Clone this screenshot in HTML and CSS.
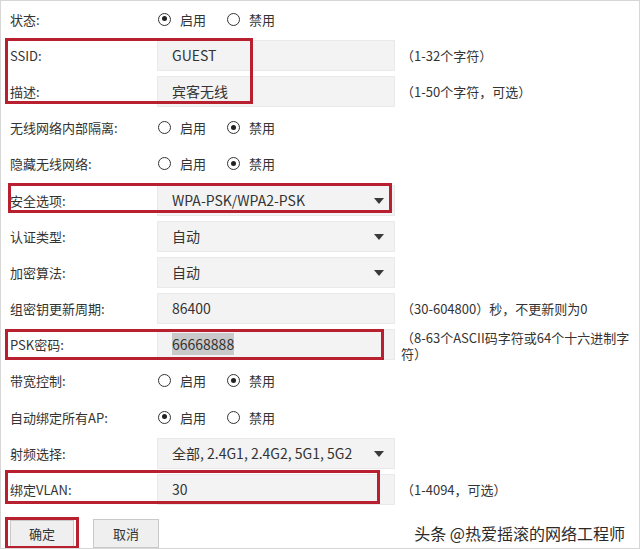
FILE: index.html
```html
<!DOCTYPE html>
<html lang="zh-CN">
<head>
<meta charset="utf-8">
<link rel="stylesheet" href="styles.css">
</head>
<body>
<div class="page">
  <div class="row">
    <div class="label">状态:</div>
    <div class="radios">
      <span class="radio checked"></span><span class="rtext">启用</span>
      <span class="radio"></span><span class="rtext">禁用</span>
    </div>
  </div>
  <div class="group">
    <div class="row">
      <div class="label">SSID:</div>
      <div class="input">GUEST</div>
      <div class="hint">（1-32个字符）</div>
    </div>
    <div class="row">
      <div class="label">描述:</div>
      <div class="input">宾客无线</div>
      <div class="hint">（1-50个字符，可选）</div>
    </div>
    <div class="redbox box-ssid"></div>
  </div>
  <div class="row">
    <div class="label">无线网络内部隔离:</div>
    <div class="radios">
      <span class="radio"></span><span class="rtext">启用</span>
      <span class="radio checked"></span><span class="rtext">禁用</span>
    </div>
  </div>
  <div class="row">
    <div class="label">隐藏无线网络:</div>
    <div class="radios">
      <span class="radio"></span><span class="rtext">启用</span>
      <span class="radio checked"></span><span class="rtext">禁用</span>
    </div>
  </div>
  <div class="row">
    <div class="label">安全选项:</div>
    <div class="input select">WPA-PSK/WPA2-PSK<span class="arrow"></span></div>
    <div class="redbox box-sec"></div>
  </div>
  <div class="row">
    <div class="label">认证类型:</div>
    <div class="input select">自动<span class="arrow"></span></div>
  </div>
  <div class="row">
    <div class="label">加密算法:</div>
    <div class="input select">自动<span class="arrow"></span></div>
  </div>
  <div class="row">
    <div class="label">组密钥更新周期:</div>
    <div class="input">86400</div>
    <div class="hint">（30-604800）秒，不更新则为0</div>
  </div>
  <div class="row">
    <div class="label">PSK密码:</div>
    <div class="input"><span class="sel">66668888</span></div>
    <div class="hint wrap">（8-63个ASCII码字符或64个十六进制字符）</div>
    <div class="redbox box-psk"></div>
  </div>
  <div class="row">
    <div class="label">带宽控制:</div>
    <div class="radios">
      <span class="radio"></span><span class="rtext">启用</span>
      <span class="radio checked"></span><span class="rtext">禁用</span>
    </div>
  </div>
  <div class="row">
    <div class="label">自动绑定所有AP:</div>
    <div class="radios">
      <span class="radio checked"></span><span class="rtext">启用</span>
      <span class="radio"></span><span class="rtext">禁用</span>
    </div>
  </div>
  <div class="row">
    <div class="label">射频选择:</div>
    <div class="input select">全部, 2.4G1, 2.4G2, 5G1, 5G2<span class="arrow"></span></div>
  </div>
  <div class="row">
    <div class="label">绑定VLAN:</div>
    <div class="input">30</div>
    <div class="hint">（1-4094，可选）</div>
    <div class="redbox box-vlan"></div>
  </div>
  <div class="actions">
    <div class="btn-wrap"><button class="btn">确定</button><div class="redbox box-ok"></div></div>
    <button class="btn btn-cancel">取消</button>
    <div class="watermark">头条 @热爱摇滚的网络工程师</div>
  </div>
</div>
</body>
</html>
```

FILE: styles.css
```css
html, body {
  margin: 0;
  padding: 0;
  background: #fff;
}
body {
  width: 640px;
  height: 549px;
  box-sizing: border-box;
  border: 1px solid #d6d6d6;
  overflow: hidden;
  font-family: "Noto Sans CJK SC", "Noto Sans", sans-serif;
  color: #333;
  font-size: 13px;
}
.page {
  display: flex;
  flex-direction: column;
}
.group {
  position: relative;
}
.row {
  position: relative;
  display: grid;
  grid-template-columns: 147px 238px 1fr;
  align-items: center;
  height: 36.2px;
  padding-left: 9px;
}
.label {
  font-size: 13px;
  color: #333;
  white-space: nowrap;
}
.input {
  position: relative;
  height: 31px;
  box-sizing: border-box;
  background: #f3f3f3;
  border: 1px solid #e9e9e9;
  padding-left: 14px;
  font-size: 14px;
  line-height: 29px;
  color: #333;
  white-space: nowrap;
}
.select .arrow {
  position: absolute;
  right: 10px;
  top: 12px;
  width: 0;
  height: 0;
  border-left: 5px solid transparent;
  border-right: 5px solid transparent;
  border-top: 6px solid #3a3a3a;
}
.sel {
  background: #c9c9c9;
  padding: 1px 0;
}
.hint {
  margin-left: 6px;
  font-size: 13px;
  color: #333;
  white-space: nowrap;
}
.hint.wrap {
  white-space: normal;
  line-height: 16px;
  margin-left: 6px;
  margin-top: 2px;
  width: 234px;
}
.radios {
  display: flex;
  align-items: center;
  font-size: 13px;
}
.radio {
  width: 13px;
  height: 13px;
  box-sizing: border-box;
  border: 1.5px solid #333;
  border-radius: 50%;
  position: relative;
  margin-left: 1px;
}
.radio.checked::after {
  content: "";
  position: absolute;
  left: 2.5px;
  top: 2.5px;
  width: 5px;
  height: 5px;
  border-radius: 50%;
  background: #222;
}
.rtext {
  margin-left: 9px;
  margin-right: 20px;
}
.redbox {
  position: absolute;
  box-sizing: border-box;
  border: 3px solid #b8202f;
  pointer-events: none;
}
.box-ssid {
  left: 4px;
  top: 1px;
  width: 248px;
  height: 66px;
}
.box-sec {
  left: 7px;
  top: 1px;
  width: 384px;
  height: 30px;
}
.box-psk {
  left: 4px;
  top: 2px;
  width: 379px;
  height: 31px;
}
.box-vlan {
  left: 4px;
  top: -1px;
  width: 375px;
  height: 34px;
}
.actions {
  display: flex;
  align-items: center;
  padding-left: 9px;
  margin-top: 11px;
}
.btn-wrap {
  position: relative;
}
.box-ok {
  left: -5px;
  top: -3px;
  width: 74px;
  height: 32px;
}
.btn {
  display: block;
  width: 64px;
  height: 27px;
  box-sizing: border-box;
  background: #efefef;
  border: 1px solid #c9c9c9;
  font-family: "Noto Sans CJK SC", sans-serif;
  font-size: 13px;
  color: #333;
  padding: 0;
}
.btn-cancel {
  margin-left: 19px;
  width: 66px;
  height: 29px;
}
.watermark {
  margin-left: auto;
  margin-right: 14px;
  font-size: 16px;
  color: #2a2a2a;
  text-shadow: 0 0 1px #fff;
}
```
